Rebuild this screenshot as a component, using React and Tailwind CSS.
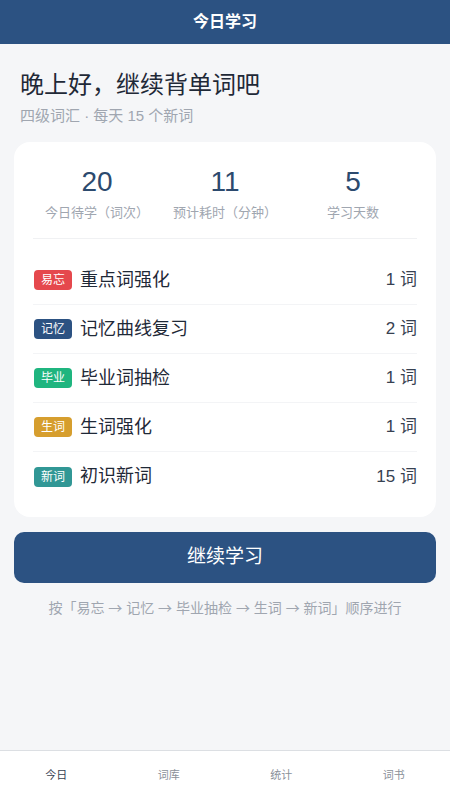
import React from 'react'

const font = { fontFamily: '"Liberation Sans", "Noto Sans CJK SC", sans-serif' }
const cjk = { fontFamily: '"Noto Sans CJK SC", sans-serif' }

const stats = [
  { value: '20', label: '今日待学（词次）' },
  { value: '11', label: '预计耗时（分钟）' },
  { value: '5', label: '学习天数' },
]

const tasks = [
  { tag: '易忘', color: 'bg-[#e5484d]', title: '重点词强化', count: '1 词' },
  { tag: '记忆', color: 'bg-[#2c5282]', title: '记忆曲线复习', count: '2 词' },
  { tag: '毕业', color: 'bg-[#1fb57f]', title: '毕业词抽检', count: '1 词' },
  { tag: '生词', color: 'bg-[#d69e2e]', title: '生词强化', count: '1 词' },
  { tag: '新词', color: 'bg-[#319795]', title: '初识新词', count: '15 词' },
]

const order = ['易忘', '记忆', '毕业抽检', '生词', '新词']

const tabs = ['今日', '词库', '统计', '词书']

export default function App() {
  return (
    <div className="h-[800px] flex flex-col bg-[#f5f6f8]" style={font}>
      <header className="h-[44px] shrink-0 bg-[#2c5282] flex items-center justify-center">
        <span className="text-white text-[16px] font-bold">今日学习</span>
      </header>

      <main className="flex-1 px-[14px]">
        <div className="px-[6px] pt-[25px]">
          <h1 className="text-[24px] leading-[32px] text-[#1f2937]">晚上好，继续背单词吧</h1>
          <p className="text-[15px] leading-[22px] text-[#a0a6b0] mt-[4px]">四级词汇 · 每天 15 个新词</p>
        </div>

        <div className="mt-[15px] bg-white rounded-[16px] px-[19px] pt-[22px] pb-[16px]">
          <div className="grid grid-cols-3 pb-[16px] border-b border-[#f0f1f3]">
            {stats.map((s) => (
              <div key={s.label} className="flex flex-col items-center">
                <span className="text-[28px] leading-[36px] text-[#2c4a6e]">{s.value}</span>
                <span className="text-[13px] leading-[18px] text-[#a0a6b0] mt-[4px]">{s.label}</span>
              </div>
            ))}
          </div>

          <div className="pt-[17px]">
            {tasks.map((t, i) => (
              <div
                key={t.tag}
                className={`h-[49px] flex items-center ${i < tasks.length - 1 ? 'border-b border-[#f3f4f6]' : ''}`}
              >
                <span className={`${t.color} text-white text-[12px] leading-[20px] w-[38px] text-center rounded-[4px] ml-[1px]`}>
                  {t.tag}
                </span>
                <span className="ml-[8px] text-[18px] text-[#1f2937]">{t.title}</span>
                <span className="ml-auto text-[17px] text-[#374151]">{t.count}</span>
              </div>
            ))}
          </div>
        </div>

        <button className="mt-[15px] w-full h-[51px] bg-[#2c5282] rounded-[10px] text-white text-[19px]">
          继续学习
        </button>

        <p className="mt-[14px] text-center text-[14px] text-[#a0a6b0]">
          按「
          {order.map((o, i) => (
            <React.Fragment key={o}>
              {o}
              {i < order.length - 1 && (
                <>
                  {' '}
                  <span style={cjk}>→</span>{' '}
                </>
              )}
            </React.Fragment>
          ))}
          」顺序进行
        </p>
      </main>

      <nav className="h-[50px] shrink-0 bg-white border-t border-[#dcdfe3] grid grid-cols-4">
        {tabs.map((t, i) => (
          <div
            key={t}
            className={`flex items-center justify-center text-[11px] ${i === 0 ? 'text-[#374151]' : 'text-[#8a9099]'}`}
          >
            {t}
          </div>
        ))}
      </nav>
    </div>
  )
}
